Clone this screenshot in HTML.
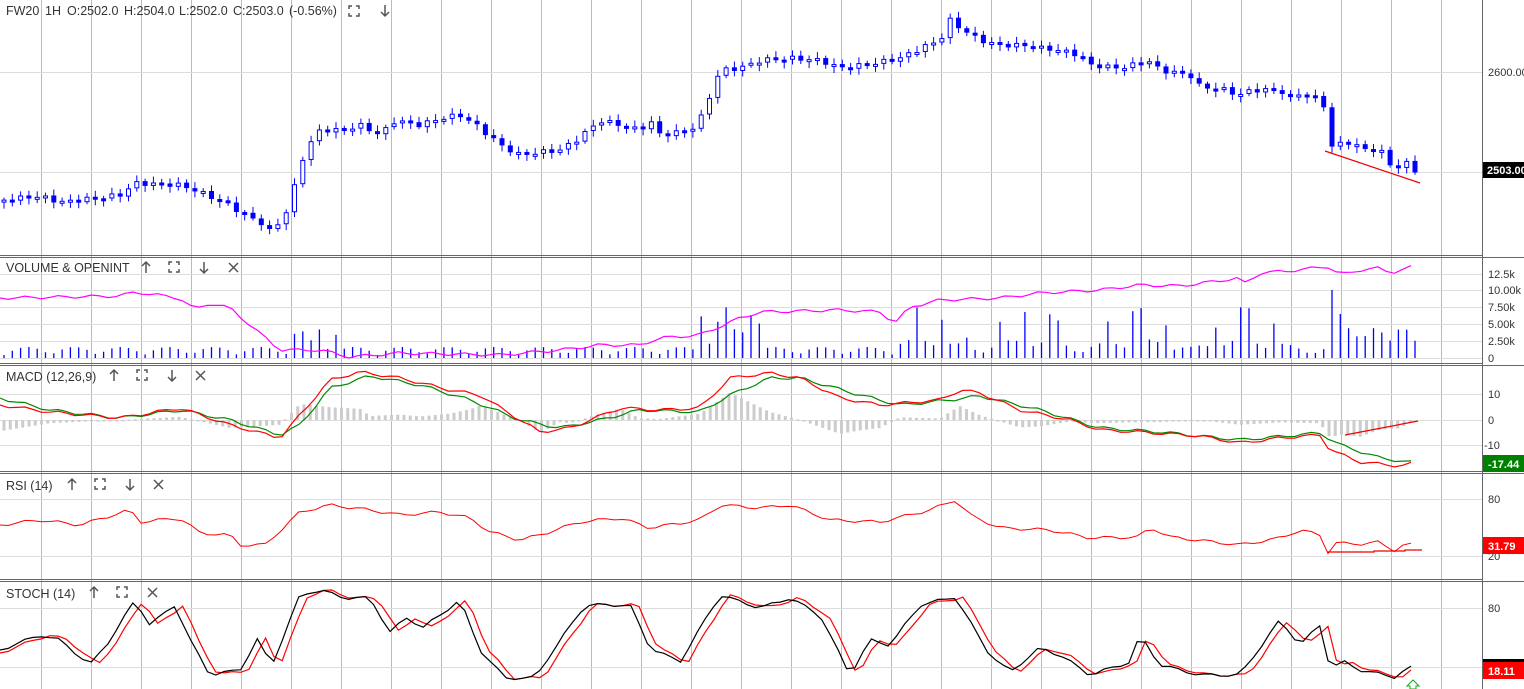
<!DOCTYPE html>
<html><head><meta charset="utf-8"><style>
html,body{margin:0;padding:0;background:#fff;width:1524px;height:689px;overflow:hidden}
svg{display:block;font-family:"Liberation Sans",Arial,sans-serif}
.t{font-size:12.5px;fill:#333;white-space:pre}
.a{font-size:11px;fill:#333}
</style></head><body>
<svg id="s" width="1524" height="689" xmlns="http://www.w3.org/2000/svg">
<g id="grid"></g>
<g id="plot"></g>
<g stroke="#666" stroke-width="1">
<line x1="0" y1="255.5" x2="1482" y2="255.5"/><line x1="0" y1="257.5" x2="1524" y2="257.5"/>
<line x1="0" y1="363.5" x2="1482" y2="363.5"/><line x1="0" y1="365.5" x2="1524" y2="365.5"/>
<line x1="0" y1="471.5" x2="1482" y2="471.5"/><line x1="0" y1="473.5" x2="1524" y2="473.5"/>
<line x1="0" y1="579.5" x2="1482" y2="579.5"/><line x1="0" y1="581.5" x2="1524" y2="581.5"/>
<line x1="1482.5" y1="0" x2="1482.5" y2="689"/>
</g>
<text class="t" x="6" y="15"><tspan x="6">FW20</tspan><tspan x="45">1H</tspan><tspan x="67">O:2502.0</tspan><tspan x="124">H:2504.0</tspan><tspan x="179">L:2502.0</tspan><tspan x="233">C:2503.0</tspan><tspan x="289">(-0.56%)</tspan></text>
<text class="t" x="6" y="272">VOLUME &amp; OPENINT</text>
<text class="t" x="6" y="381">MACD (12,26,9)</text>
<text class="t" x="6" y="490">RSI (14)</text>
<text class="t" x="6" y="598">STOCH (14)</text>
<g id="icons" stroke="#555" stroke-width="1.5" fill="none"></g>
<g class="a">
<text x="1488" y="76">2600.00</text>
<text x="1488" y="278">12.5k</text><text x="1488" y="294">10.00k</text><text x="1488" y="311">7.50k</text>
<text x="1488" y="328">5.00k</text><text x="1488" y="345">2.50k</text><text x="1488" y="362">0</text>
<text x="1488" y="398">10</text><text x="1488" y="424">0</text><text x="1484" y="449">-10</text>
<text x="1488" y="503">80</text><text x="1488" y="560">20</text>
<text x="1488" y="612">80</text>
</g>
<rect x="1483" y="162" width="41" height="16" fill="#000"/><text x="1487" y="174" font-size="11" font-weight="bold" fill="#fff">2503.00</text>
<rect x="1483" y="455" width="41" height="17" fill="#008000"/><text x="1488" y="468" font-size="11" font-weight="bold" fill="#fff">-17.44</text>
<rect x="1483" y="537" width="41" height="17" fill="#f00"/><text x="1488" y="550" font-size="11" font-weight="bold" fill="#fff">31.79</text>
<rect x="1483" y="659" width="41" height="4" fill="#000"/>
<rect x="1483" y="662" width="41" height="17" fill="#f00"/><text x="1488" y="675" font-size="11" font-weight="bold" fill="#fff">18.11</text>
<path d="M1413 680 l-6 6 h3 v3 h6 v-3 h3 z" fill="none" stroke="#1a1" stroke-width="1"/>
</svg>
<script>
(function(){
var NS="http://www.w3.org/2000/svg";
function el(p,t,a){var e=document.createElementNS(NS,t);for(var k in a)e.setAttribute(k,a[k]);p.appendChild(e);return e;}
var G=document.getElementById('grid'),P=document.getElementById('plot'),I=document.getElementById('icons');
for(var x=41.5;x<1482;x+=50)el(G,'line',{x1:x,y1:0,x2:x,y2:689,stroke:'#bbb','stroke-width':1});
[72,172,274,290,307,324,341,358,394,420,445,499,556,608,667].forEach(function(y){el(G,'line',{x1:0,y1:y+.5,x2:1482,y2:y+.5,stroke:'#ddd','stroke-width':1});});
function interp(k,x){for(var i=0;i<k.length-1;i++){if(x<=k[i+1][0]){var t=(x-k[i][0])/(k[i+1][0]-k[i][0]);return k[i][1]+t*(k[i+1][1]-k[i][1]);}}return k[k.length-1][1];}
function line(k,col,sh,w){var d='';for(var x=0;x<=1415;x+=8.3){var y=interp(k,x-(sh||0))+(Math.sin(x*1.7)*1.5);d+=(d?'L':'M')+x.toFixed(1)+' '+y.toFixed(1);}el(P,'path',{d:d,fill:'none',stroke:col,'stroke-width':w||1.2});}
var price=[[0,200],[40,196],[60,202],[120,195],[135,183],[180,185],[200,192],[230,205],[240,212],[265,225],[270,232],[285,215],[295,185],[305,150],[320,130],[340,130],[360,125],[380,135],[395,120],[420,125],[440,118],[460,115],[480,128],[500,145],[520,155],[540,152],[560,150],[580,137],[600,120],[620,125],[640,130],[650,120],[660,135],[690,130],[700,120],[710,95],[720,70],[740,68],[760,60],[790,58],[820,60],[840,68],[870,64],[900,58],[920,48],[940,40],[950,20],[960,28],[980,40],[1000,45],[1020,45],[1040,48],[1060,50],[1080,55],[1090,65],[1120,68],[1140,63],[1145,58],[1160,70],[1190,75],[1200,87],[1220,88],[1240,95],[1250,90],[1280,90],[1290,100],[1300,92],[1320,100],[1326,108],[1328,150],[1345,140],[1360,148],[1380,150],[1395,170],[1408,162],[1415,170]];
var prev=200,i=0;
for(var x=4;x<=1416;x+=8.3,i++){var c=interp(price,x)+Math.sin(i*2.3)*2.5;var o=prev;var tp=Math.min(o,c),bt=Math.max(o,c);if(bt-tp<3){bt=tp+3;}
 var hi=tp-2-Math.abs(Math.sin(i*1.3))*4,lo=bt+2+Math.abs(Math.cos(i*1.1))*4;
 el(P,'line',{x1:x,y1:hi,x2:x,y2:lo,stroke:'#00f','stroke-width':1});
 if(c>o)el(P,'rect',{x:x-2.5,y:tp,width:5,height:bt-tp,fill:'#00f'});else el(P,'rect',{x:x-2,y:tp+.5,width:4,height:bt-tp-1,fill:'#fff',stroke:'#00f','stroke-width':1});
 prev=c;
 var vh=3+Math.abs(Math.sin(i*3.7))*8;if(x>290&&x<340)vh+=Math.abs(Math.sin(i*5))*20;if(x>700&&x<760)vh+=Math.abs(Math.sin(i*4.1))*40;if(x>900&&x<1300)vh+=Math.abs(Math.sin(i*2.9))*20*(Math.sin(i*1.9)>0.3?2:0.4);if(x>1325&&x<1330)vh=92;else if(x>=1330&&x<1336)vh=68;else if(x>=1336&&x<1342)vh=44;else if(x>1342&&x<1415)vh=15+Math.abs(Math.sin(i*2.2))*15;
 el(P,'line',{x1:x,y1:358-vh,x2:x,y2:358,stroke:'#00f','stroke-width':1.3});
}
el(P,'line',{x1:1325,y1:151,x2:1420,y2:183,stroke:'#e00','stroke-width':1.2});
line([[0,298],[120,296],[135,292],[180,298],[195,310],[210,303],[230,308],[250,325],[280,350],[320,350],[350,357],[400,353],[500,355],[560,350],[600,345],[640,345],[660,338],[700,335],[740,318],[760,312],[840,310],[880,312],[895,323],[910,307],[940,300],[1000,298],[1040,293],[1100,290],[1140,285],[1180,286],[1240,278],[1245,283],[1260,273],[1300,270],[1327,266],[1340,275],[1360,270],[1380,268],[1390,273],[1415,266]],'#f0f');
var mr=[[0,405],[50,412],[120,418],[180,408],[230,425],[280,438],[300,415],[330,380],[360,372],[400,378],[450,390],[480,395],[520,420],[540,432],[570,428],[620,408],[660,410],[700,408],[730,378],[770,373],[800,378],[840,398],[880,405],[940,400],[960,390],[980,393],[1020,410],[1070,420],[1100,430],[1140,432],[1200,436],[1240,443],[1280,438],[1320,435],[1330,450],[1360,462],[1400,466],[1415,463]];
var mg=[[0,398],[50,410],[120,418],[180,410],[230,420],[280,435],[300,425],[330,388],[370,376],[420,385],[470,400],[520,420],[560,428],[600,420],[640,410],[700,412],[730,395],[770,378],[800,378],[860,395],[900,405],[950,400],[980,396],[1040,410],[1100,428],[1160,432],[1240,440],[1320,433],[1340,445],[1380,458],[1415,463]];
for(var x=4;x<=1416;x+=6.25){var h=(interp(mr,x)-interp(mg,x))*1.6;el(P,'rect',{x:x-1.5,y:Math.min(420,420+h),width:3,height:Math.max(1.5,Math.abs(h)),fill:'#ccc'});}
line(mg,'#080');line(mr,'#f00');
el(P,'line',{x1:1345,y1:435,x2:1418,y2:421,stroke:'#e00','stroke-width':1.2});
line([[0,525],[40,520],[80,525],[130,510],[140,522],[180,518],[200,533],[230,535],[240,545],[265,545],[300,512],[330,505],[370,510],[400,515],[440,512],[470,518],[490,532],[520,540],[540,535],[580,522],[620,518],[650,528],[700,520],[720,505],[760,508],[790,505],[830,520],[880,522],[930,510],[955,500],[970,515],[1000,528],[1050,530],[1090,538],[1140,537],[1150,527],[1170,537],[1240,545],[1280,538],[1300,530],[1320,535],[1328,552],[1335,543],[1360,544],[1380,542],[1393,551],[1405,544],[1415,545]],'#f00',0,1);
el(P,'path',{d:'M1327 552 H1374 V551 H1405 V550 H1422',fill:'none',stroke:'#e00','stroke-width':1.2});
var st=[[0,650],[40,635],[60,640],[90,665],[110,640],[135,600],[150,625],[175,605],[190,640],[210,675],[240,670],[260,635],[270,670],[300,595],[320,590],[345,598],[370,598],[390,632],[410,615],[420,630],[460,600],[480,650],[505,678],[535,678],[550,655],[585,605],[630,605],[650,648],[680,662],[720,595],[760,608],[790,598],[820,615],[850,675],[870,640],[890,645],[920,605],[955,597],[990,655],[1010,672],[1040,648],[1060,655],[1090,675],[1130,662],[1140,635],[1160,665],[1200,675],[1240,675],[1280,620],[1300,645],[1320,625],[1330,668],[1345,662],[1360,670],[1395,677],[1405,670],[1415,666]];
line(st,'#f00',8);line(st,'#000',0);
function pth(d){el(I,'path',{d:d});}
function fs(x,y){pth('M'+x+' '+(y+3)+'v-3h3M'+(x+7)+' '+y+'h3v3M'+(x+10)+' '+(y+7)+'v3h-3M'+(x+3)+' '+(y+10)+'h-3v-3');}
function up(x,y){pth('M'+x+' '+(y+11)+'V'+y+'M'+(x-4)+' '+(y+4)+'L'+x+' '+y+'L'+(x+4)+' '+(y+4));}
function dn(x,y){pth('M'+x+' '+y+'V'+(y+11)+'M'+(x-4)+' '+(y+7)+'L'+x+' '+(y+11)+'L'+(x+4)+' '+(y+7));}
function cl(x,y){pth('M'+x+' '+y+'l9 9M'+(x+9)+' '+y+'l-9 9');}
fs(349,6);dn(385,5);
up(146,262);fs(169,262);dn(204,262);cl(229,263);
up(114,370);fs(137,370);dn(172,370);cl(196,371);
up(72,479);fs(95,479);dn(130,479);cl(154,480);
up(94,587);fs(117,587);cl(148,588);
})();
</script>
</body></html>
